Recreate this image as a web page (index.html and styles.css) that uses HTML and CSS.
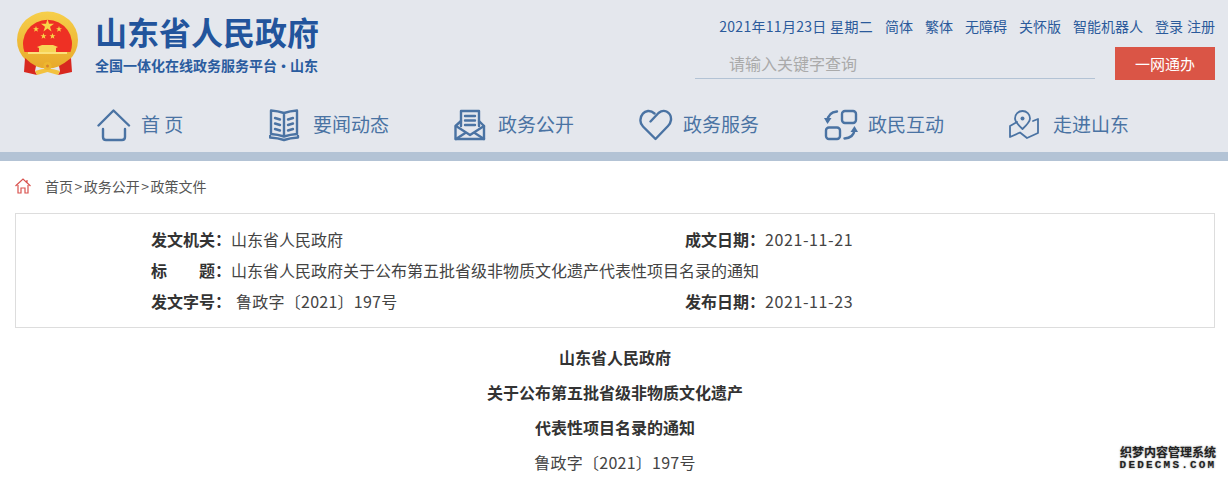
FILE: index.html
```html
<!DOCTYPE html>
<html lang="zh-CN">
<head>
<meta charset="utf-8">
<title>山东省人民政府</title>
<link rel="stylesheet" href="styles.css">
</head>
<body>
<header class="header">
  <div class="top">
    <div class="brand">
      <svg class="emblem" viewBox="17 11 62 66" aria-hidden="true">
        <defs>
          <linearGradient id="gold" x1="0" y1="0" x2="0" y2="1">
            <stop offset="0" stop-color="#f6cf4a"/>
            <stop offset="1" stop-color="#e8a92a"/>
          </linearGradient>
        </defs>
        <ellipse cx="47.500" cy="40" rx="30.500" ry="28.500" fill="url(#gold)"/>
        <path d="M24.500 53 A24.500 24 0 1 1 70.500 53 Z" fill="#ee3024" transform="translate(0 -1)"/>
        <polygon fill="#f8d648" points="47.500,19 49,23.800 54,23.800 50,26.800 51.500,31.500 47.500,28.600 43.500,31.500 45,26.800 41,23.800 46,23.800"/>
        <polygon fill="#f8d648" points="36,26 36.800,28.200 39,28.200 37.200,29.600 37.900,31.800 36,30.500 34.100,31.800 34.800,29.600 33,28.200 35.200,28.200"/>
        <polygon fill="#f8d648" points="43.500,33 44.300,35.200 46.500,35.200 44.700,36.600 45.400,38.800 43.500,37.500 41.600,38.800 42.300,36.600 40.500,35.200 42.700,35.200"/>
        <polygon fill="#f8d648" points="52.500,33 53.300,35.200 55.500,35.200 53.700,36.600 54.400,38.800 52.500,37.500 50.600,38.800 51.300,36.600 49.500,35.200 51.700,35.200"/>
        <polygon fill="#f8d648" points="59,26 59.800,28.200 62,28.200 60.200,29.600 60.900,31.800 59,30.500 57.100,31.800 57.800,29.600 56,28.200 58.200,28.200"/>
        <path d="M37 47 L42 45 H53 L58 47 L56 48 V52 H39 V48 Z" fill="#f7d556"/>
        <rect x="28" y="52" width="39" height="2" fill="#fbe27a"/>
        <path d="M25 58 Q30 63 36 66 L35 71 L37 75 L24 72 Z M71 58 Q65 63 59 66 L60 71 L58 75 L72 72 Z" fill="#d8281f"/>
        <path d="M35 71 Q47.500 66 60 71 L58 75 L47.500 72 L37 75 Z" fill="#f3c23f"/>
        <circle cx="47.500" cy="66" r="4" fill="#edb62f"/>
        <circle cx="47.500" cy="66" r="1.500" fill="#d8832a"/>
      </svg>
      <div class="brand-text">
        <div class="brand-name">山东省人民政府</div>
        <div class="brand-sub">全国一体化在线政务服务平台<span class="brand-dot">·</span>山东</div>
      </div>
    </div>
    <div class="tools">
      <div class="links">
        <span class="date">2021年11月23日 星期二</span>
        <a>简体</a><a>繁体</a><a>无障碍</a><a>关怀版</a><a>智能机器人</a>
        <span class="auth"><a>登录</a><a>注册</a></span>
      </div>
      <div class="search-row">
        <input class="search" type="text" placeholder="请输入关键字查询">
        <a class="btn">一网通办</a>
      </div>
    </div>
  </div>
  <nav class="nav">
    <a class="nav-item nav-home">
      <svg class="ico" viewBox="0 0 34 34"><path d="M1.500 16.500 L16.500 1.500 L32 16.500"/><path d="M6 20 V28 Q6 31 9 31 H25 Q28 31 28 28 V20"/></svg>
      <span class="nav-label">首 页</span>
    </a>
    <a class="nav-item">
      <svg class="ico" viewBox="0 0 34 34"><path d="M15 4 Q9 2 2 1.500 V25 Q9 25.500 15 27.500 Q21 25.500 28 25 V1.500 Q21 2 15 4 V27.500"/><path d="M1 27 V28.500 Q9 29 15 31 Q21 29 29 28.500 V27"/><path d="M6 9 L11 10.500 M6 14.500 L11 16 M6 20 L11 21.500 M24 9 L19 10.500 M24 14.500 L19 16 M24 20 L19 21.500"/></svg>
      <span class="nav-label">要闻动态</span>
    </a>
    <a class="nav-item">
      <svg class="ico" viewBox="0 0 34 34"><path d="M7 12 L1.500 17 V30 H30 V17 L25 12"/><path d="M7 17 V2 H25 V17"/><path d="M2 17 L16 26 L30 17 M2 30 L12 23.500 M30 30 L20 23.500"/><path d="M11 7 H21 M11 11.500 H21 M11 16 H21"/></svg>
      <span class="nav-label">政务公开</span>
    </a>
    <a class="nav-item">
      <svg class="ico" viewBox="0 0 34 34"><path d="M11.500 12.500 L19.500 4 Q23.500 .8 27.500 2.500 Q32.500 5 32 11 Q31.500 14.500 29 17 L16.500 30 L4 17.500 Q1 14.500 1.500 10.500 Q2.500 3 9 2 Q12.500 1.700 15.500 4.500"/></svg>
      <span class="nav-label">政务服务</span>
    </a>
    <a class="nav-item">
      <svg class="ico" viewBox="0 0 34 34"><rect x="18" y="2" width="14" height="12" rx="3"/><rect x="2" y="18.500" width="14" height="11.500" rx="3"/><path d="M13 2.500 Q4 3.500 3.500 12"/><path class="solid" d="M0 9 H7.500 L3.500 15 Z"/><path d="M20.500 29.500 Q29.500 29 30.500 21"/><path class="solid" d="M26.500 23 H34 L30.500 17 Z"/></svg>
      <span class="nav-label">政民互动</span>
    </a>
    <a class="nav-item">
      <svg class="ico ico-thin" viewBox="0 0 34 34"><path d="M13.500 20 Q6 13 6 9.500 A7.500 7.500 0 0 1 21 9.500 Q21 13 13.500 20 Z"/><circle class="solid" cx="13.500" cy="9.500" r="2"/><path d="M8 13 L1 17 V28 L11 23.500 L18 29 L29 24 V10 L24 12"/></svg>
      <span class="nav-label">走进山东</span>
    </a>
  </nav>
</header>
<main class="main">
  <div class="crumbs">
    <svg class="crumb-ico" viewBox="0 0 16 16"><path d="M.5 8 L8 1 L15.500 8 M12 2 V4.500 M3 7 V15 H6 V10 H10 V15 H13 V7"/></svg>
    <span>首页<span class="crumb-sep">&gt;</span>政务公开<span class="crumb-sep">&gt;</span>政策文件</span>
  </div>
  <section class="info">
    <div class="info-row">
      <div class="cell"><b class="label">发文机关：</b>山东省人民政府</div>
      <div class="cell"><b class="label">成文日期：</b><span class="num">2021-11-21</span></div>
    </div>
    <div class="info-row">
      <div class="cell cell-wide"><b class="label label-spread"><span>标</span><span>题：</span></b>山东省人民政府关于公布第五批省级非物质文化遗产代表性项目名录的通知</div>
    </div>
    <div class="info-row">
      <div class="cell"><b class="label label-gap">发文字号：</b><span class="code">鲁政字〔2021〕197号</span></div>
      <div class="cell"><b class="label">发布日期：</b><span class="num">2021-11-23</span></div>
    </div>
  </section>
  <article class="doc">
    <h1 class="doc-line">山东省人民政府</h1>
    <h1 class="doc-line">关于公布第五批省级非物质文化遗产</h1>
    <h1 class="doc-line">代表性项目名录的通知</h1>
    <p class="doc-line doc-no"><span class="code">鲁政字〔2021〕197号</span></p>
  </article>
</main>
<div class="mark">
  <div class="mark-cn">织梦内容管理系统</div>
  <div class="mark-en">DEDECMS.COM</div>
</div>
</body>
</html>
```
FILE: styles.css
```css
* { box-sizing: border-box; }
html, body { margin: 0; padding: 0; overflow: hidden; }
body {
  position: relative;
  height: 479px;
  background: #fff;
  color: #333;
  font-family: "Noto Sans CJK SC", "Noto Sans", sans-serif;
}
a { color: inherit; text-decoration: none; }

.header {
  height: 161px;
  background: #e4e7ed;
  border-bottom: 9px solid #b3c3d5;
}
.top {
  display: flex;
  justify-content: space-between;
  height: 100px;
  padding: 11px 13px 0 17px;
}
.brand { display: flex; gap: 17px; }
.emblem { width: 62px; height: 66px; display: block; margin-right: -1px; }
.brand-text { display: flex; flex-direction: column; }
.brand-name {
  margin-top: -2px;
  font-size: 32px;
  font-weight: 700;
  line-height: 44px;
  color: #22549c;
}
.brand-sub {
  margin-top: 2px;
  font-size: 14px;
  font-weight: 700;
  line-height: 20px;
  color: #2a5c9f;
  white-space: nowrap;
}
.brand-dot { margin: 0 -.5px; }
.tools { display: flex; flex-direction: column; align-items: flex-end; }
.links {
  display: flex;
  gap: 12px;
  margin-top: 5px;
  font-size: 14px;
  line-height: 20px;
  color: #2b5a9b;
}
.date { letter-spacing: .3px; }
.auth { display: flex; gap: 4px; }
.search-row { display: flex; gap: 20px; margin-top: 11px; }
.search {
  width: 400px;
  height: 32px;
  padding: 0 0 0 34px;
  border: 0;
  border-bottom: 1px solid #b3c3d5;
  background: transparent;
  font: 16px "Noto Sans CJK SC", sans-serif;
}
.search::placeholder { color: #aaa; opacity: 1; }
.btn {
  width: 100px;
  height: 33px;
  background: #da5546;
  color: #fff;
  font-size: 15px;
  line-height: 33px;
  text-align: center;
}

.nav { display: flex; padding: 9px 0 0 97px; }
.nav-item {
  display: flex;
  align-items: center;
  gap: 10px;
  width: 185px;
  height: 34px;
  font-size: 19px;
  color: #4a73a3;
  white-space: nowrap;
}
.nav-home { width: 172px; }
.nav-label { margin-bottom: 5px; }
.ico {
  flex: none;
  width: 34px;
  height: 34px;
  fill: none;
  stroke: #4a73a3;
  stroke-width: 2.400;
  stroke-linecap: round;
  stroke-linejoin: round;
}
.ico .solid { fill: #4a73a3; stroke: none; }
.ico-thin { stroke-width: 1.800; }

.main { padding: 0 13px 0 15px; }
.crumbs {
  display: flex;
  align-items: center;
  gap: 14px;
  height: 52px;
  padding-bottom: 2px;
  font-size: 14px;
  color: #555;
}
.crumb-sep { margin: 0 1.500px; }
.crumb-ico {
  width: 16px;
  height: 16px;
  fill: none;
  stroke: #d9534f;
  stroke-width: 1.200;
}
.info {
  height: 115px;
  padding: 10px 0 0 135px;
  border: 1px solid #ddd;
  font-size: 16px;
  color: #444;
}
.info-row { display: flex; height: 31px; line-height: 31px; }
.cell { flex: none; width: 534px; white-space: nowrap; }
.cell-wide { width: auto; }
.label { font-weight: 700; color: #333; display: inline-block; width: 80px; }
.label-gap { width: 85px; }
.label-spread { display: inline-flex; justify-content: space-between; }
.num { letter-spacing: .6px; }
.code { letter-spacing: .25px; }
.doc { padding-top: 12px; text-align: center; }
.doc-line {
  margin: 0;
  height: 35px;
  font-size: 16px;
  line-height: 35px;
  color: #333;
  font-weight: 700;
}
.doc-no { font-weight: 400; color: #444; }

.mark {
  position: absolute;
  right: 11px;
  bottom: 8px;
  width: 98px;
  background: #fff;
  color: #222;
  text-align: center;
  white-space: nowrap;
  text-shadow: 0 0 2px #888;
}
.mark-cn { font-size: 12px; font-weight: 700; line-height: 14px; }
.mark-en {
  margin-top: 1px;
  font-family: "Liberation Mono", monospace;
  font-size: 11px;
  font-weight: 700;
  line-height: 11px;
  letter-spacing: 2.200px;
}
```
